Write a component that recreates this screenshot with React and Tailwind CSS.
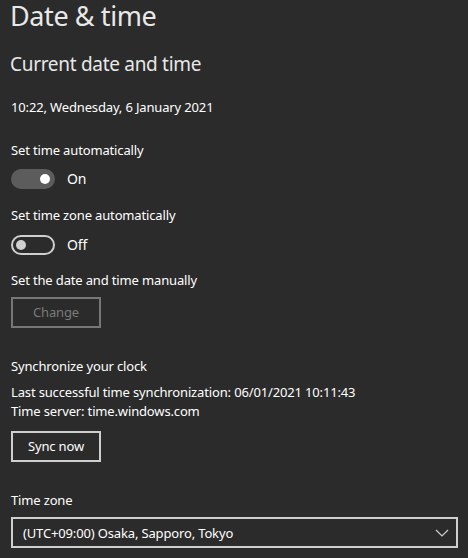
import React from 'react';

function Toggle({ on }) {
  if (on) {
    return (
      <div className="flex items-center w-[44px] h-[20px] rounded-full bg-[#5c5c5c] justify-end pr-[5px]">
        <div className="w-[10px] h-[10px] rounded-full bg-white" />
      </div>
    );
  }
  return (
    <div className="flex items-center w-[44px] h-[20px] rounded-full border-2 border-[#cfcfcf] pl-[3px]">
      <div className="w-[10px] h-[10px] rounded-full bg-[#cfcfcf]" />
    </div>
  );
}

export default function App() {
  return (
    <div
      className="w-[468px] h-[558px] bg-[#2b2b2b] text-white pl-[11px] overflow-hidden text-[13px] tracking-[-0.15px]"
      style={{ fontFamily: '"Noto Sans", "Open Sans", sans-serif' }}
    >
      <h1 className="text-[27px] leading-[32px] tracking-[-0.4px] text-[#e8e8e8] ml-[-1px]">Date &amp; time</h1>
      <h2 className="mt-[18px] text-[19px] leading-[28px] tracking-[-0.3px] text-[#e8e8e8] ml-[-1px]">Current date and time</h2>

      <div className="mt-[19px] leading-[20px]">10:22, Wednesday, 6 January 2021</div>

      {/* automatic time */}
      <div className="mt-[23px] leading-[20px]">Set time automatically</div>
      <div className="mt-[9px] flex items-center gap-[12px]">
        <Toggle on />
        <span className="text-[14px] leading-[20px]">On</span>
      </div>

      <div className="mt-[16px] leading-[20px]">Set time zone automatically</div>
      <div className="mt-[10px] flex items-center gap-[12px]">
        <Toggle on={false} />
        <span className="text-[14px] leading-[20px]">Off</span>
      </div>

      <div className="mt-[15px] leading-[20px]">Set the date and time manually</div>
      <button className="mt-[7px] flex items-center justify-center w-[90px] h-[31px] border-2 border-[#777777] text-[#7a7a7a] text-[13px]">
        Change
      </button>

      {/* sync */}
      <div className="mt-[28px] leading-[20px]">Synchronize your clock</div>
      <div className="mt-[7px] leading-[19px]">
        <div>Last successful time synchronization: 06/01/2021 10:11:43</div>
        <div>Time server: time.windows.com</div>
      </div>
      <button className="mt-[10px] flex items-center justify-center w-[90px] h-[31px] border-2 border-[#cfcfcf] text-white text-[13px]">
        Sync now
      </button>

      {/* zone */}
      <div className="mt-[28px] leading-[20px]">Time zone</div>
      <div className="mt-[7px] flex items-center justify-between w-[447px] h-[31px] border-2 border-[#cfcfcf] pl-[10px] pr-[7px]">
        <span className="leading-[20px]">(UTC+09:00) Osaka, Sapporo, Tokyo</span>
        <svg width="14" height="8" viewBox="0 0 14 8" fill="none" stroke="#cfcfcf" strokeWidth="1.2">
          <path d="M1 1 L7 7 L13 1" />
        </svg>
      </div>
    </div>
  );
}
